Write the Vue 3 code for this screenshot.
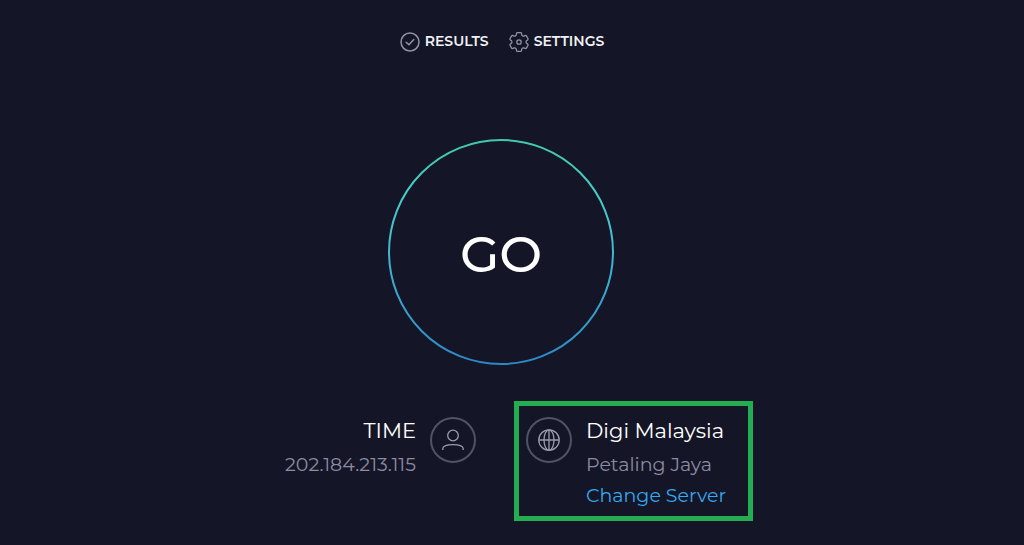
<script setup>
const client = { name: 'TIME', detail: '202.184.213.115' }
const server = { name: 'Digi Malaysia', detail: 'Petaling Jaya' }
</script>

<template>
  <main class="page">
    <nav class="nav">
      <a href="#results" class="nav-link">
        <svg class="nav-icon" viewBox="0 0 20 20" aria-hidden="true">
          <circle cx="10" cy="10" r="9" stroke-width="1.5" />
          <path d="M6.2 10.2 8.9 12.7 13.8 7.5" stroke-width="1.5" />
        </svg>
        <span>RESULTS</span>
      </a>
      <a href="#settings" class="nav-link">
        <svg class="nav-icon" viewBox="2.5 2.5 19 19" aria-hidden="true">
          <path d="M9.594 3.94c.09-.542.56-.94 1.11-.94h2.593c.55 0 1.02.398 1.11.94l.213 1.281c.063.374.313.686.645.87.074.04.147.083.22.127.325.196.72.257 1.075.124l1.217-.456a1.125 1.125 0 0 1 1.37.49l1.296 2.247a1.125 1.125 0 0 1-.26 1.431l-1.003.827c-.293.241-.438.613-.43.992a7.723 7.723 0 0 1 0 .255c-.008.378.137.75.43.991l1.004.827c.424.35.534.955.26 1.43l-1.298 2.247a1.125 1.125 0 0 1-1.369.491l-1.217-.456c-.355-.133-.75-.072-1.076.124a6.47 6.47 0 0 1-.22.128c-.331.183-.581.495-.644.869l-.213 1.281c-.09.543-.56.94-1.11.94h-2.594c-.55 0-1.019-.398-1.11-.94l-.213-1.281c-.062-.374-.312-.686-.644-.87a6.52 6.52 0 0 1-.22-.127c-.325-.196-.72-.257-1.076-.124l-1.217.456a1.125 1.125 0 0 1-1.369-.49l-1.297-2.247a1.125 1.125 0 0 1 .26-1.431l1.004-.827c.292-.24.437-.613.43-.991a6.932 6.932 0 0 1 0-.255c.007-.38-.138-.751-.43-.992l-1.004-.827a1.125 1.125 0 0 1-.26-1.43l1.297-2.247a1.125 1.125 0 0 1 1.37-.491l1.216.456c.356.133.751.072 1.076-.124.072-.044.146-.086.22-.128.332-.183.582-.495.644-.869l.214-1.28Z" />
          <circle cx="12" cy="12" r="2.1" />
        </svg>
        <span>SETTINGS</span>
      </a>
    </nav>

    <button type="button" class="go">
      <svg class="ring" viewBox="0 0 226 226" aria-hidden="true">
        <defs>
          <linearGradient id="ring-stroke" x1="0" y1="0" x2="0" y2="1">
            <stop offset="0" stop-color="#40c9a8" />
            <stop offset="0.25" stop-color="#46cdc8" />
            <stop offset="0.55" stop-color="#3fb4d4" />
            <stop offset="1" stop-color="#2b88c4" />
          </linearGradient>
        </defs>
        <circle cx="113" cy="113" r="112" fill="none" stroke="url(#ring-stroke)" stroke-width="2" />
      </svg>
      <span class="go-label">GO</span>
    </button>

    <div class="hosts">
      <section class="host client">
        <div class="host-text">
          <strong class="host-name">{{ client.name }}</strong>
          <span class="host-detail">{{ client.detail }}</span>
        </div>
        <svg class="host-icon" viewBox="0 0 46 46" aria-hidden="true">
          <circle class="rim" cx="23" cy="23" r="22" />
          <circle cx="23" cy="18.5" r="5.3" />
          <path d="M12.8 33V31.8C12.8 28.6 17 27.6 23 27.6S33.2 28.6 33.2 31.8V33" />
        </svg>
      </section>

      <section class="host server">
        <svg class="host-icon" viewBox="0 0 46 46" aria-hidden="true">
          <circle class="rim" cx="23" cy="23" r="22" />
          <circle cx="23" cy="23" r="10.2" />
          <ellipse cx="23" cy="23" rx="5" ry="10.2" />
          <path d="M12.8 23H33.2M23 12.8V33.2" />
        </svg>
        <div class="host-text">
          <strong class="host-name">{{ server.name }}</strong>
          <span class="host-detail">{{ server.detail }}</span>
          <a href="#servers" class="change">Change Server</a>
        </div>
      </section>
    </div>
  </main>
</template>

<style>
body {
  margin: 0;
  background: #141526;
}
</style>

<style scoped>
.page {
  box-sizing: border-box;
  min-height: 100vh;
  padding: 32px 22px 24px 0;
  display: flex;
  flex-direction: column;
  align-items: center;
  background: #141526;
  color: #fff;
  font-family: Montserrat, Inter, "Open Sans", sans-serif;
}

.nav {
  display: flex;
  gap: 20px;
  padding-left: 2px;
}

.nav-link {
  display: flex;
  align-items: flex-start;
  gap: 5px;
  color: #f0f0f6;
  font-size: 14px;
  font-weight: 600;
  line-height: 18px;
  text-decoration: none;
}

.nav-icon {
  width: 20px;
  height: 20px;
  fill: none;
  stroke: #9193a8;
  stroke-width: 1.2;
  stroke-linecap: round;
  stroke-linejoin: round;
}

.go {
  display: grid;
  place-items: center;
  width: 226px;
  height: 226px;
  margin: 87px 0 36px;
  padding: 0;
  border: 0;
  border-radius: 50%;
  background: none;
  color: #fff;
  font: inherit;
  cursor: pointer;
}

.ring,
.go-label {
  grid-area: 1 / 1;
}

.ring {
  width: 100%;
  height: 100%;
}

.go-label {
  padding-top: 4px;
  font-size: 51px;
  font-weight: 500;
  line-height: 60px;
}

.hosts {
  align-self: stretch;
  display: grid;
  grid-template-columns: 1fr 1fr;
  align-items: start;
  gap: 38px;
  padding-right: 12px;
}

.host {
  display: flex;
  gap: 14px;
}

.client {
  justify-content: flex-end;
  padding-top: 16px;
  text-align: right;
}

.server {
  justify-self: start;
  padding: 11px 22px 5px 7px;
  border: 5px solid #24ac50;
}

.host-icon {
  flex: none;
  width: 46px;
  height: 46px;
  fill: none;
  stroke: #9a9bb0;
  stroke-width: 1.3;
}

.rim {
  stroke: #515266;
  stroke-width: 2;
}

.host-text {
  display: flex;
  flex-direction: column;
}

.host-name {
  font-size: 21px;
  font-weight: 400;
  line-height: 28px;
}

.host-detail {
  margin-top: 4px;
  color: #8b8ca3;
  font-size: 19px;
  line-height: 32px;
}

.change {
  color: #35a8ee;
  font-size: 19px;
  line-height: 30px;
  text-decoration: none;
}
</style>
